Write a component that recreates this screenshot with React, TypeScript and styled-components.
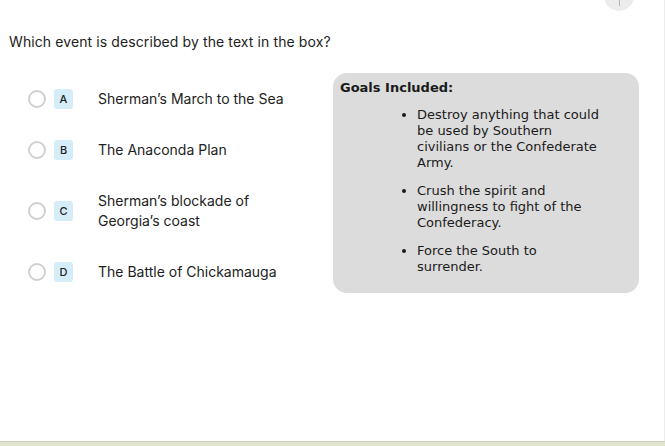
import styled, { createGlobalStyle } from "styled-components";

const GlobalStyle = createGlobalStyle`
  html, body {
    margin: 0;
    padding: 0;
    background: #ffffff;
  }
`;

const Page = styled.div`
  position: relative;
  width: 665px;
  height: 446px;
  overflow: hidden;
  display: flex;
  flex-direction: column;
  background: #fff;
  font-family: "Inter", "Lato", sans-serif;
  color: #222;
`;

const Body = styled.div`
  flex: 1;
  border-right: 1px solid #ececec;
  padding: 33px 0 0 9px;
`;

const Question = styled.div`
  font-size: 14px;
  line-height: 18px;
  letter-spacing: 0.1px;
`;

const Columns = styled.div`
  display: flex;
  align-items: flex-start;
  margin-top: 22px;
`;

const Options = styled.div`
  width: 324px;
  display: flex;
  flex-direction: column;
  margin-top: 1px;
`;

const Option = styled.div`
  display: flex;
  align-items: center;
  padding: 15px 0 16px 19px;
`;

const Radio = styled.span`
  width: 14px;
  height: 14px;
  border: 2px solid #d0d0d0;
  border-radius: 50%;
  flex-shrink: 0;
`;

const Badge = styled.span`
  width: 19px;
  height: 20px;
  margin-left: 8px;
  border-radius: 3px;
  background: #d5edf8;
  display: flex;
  align-items: center;
  justify-content: center;
  font-size: 11px;
  font-weight: 500;
  color: #222;
  flex-shrink: 0;
`;

const OptionText = styled.span`
  margin-left: 25px;
  font-size: 14px;
  line-height: 20px;
  width: 205px;
`;

const Box = styled.div`
  width: 306px;
  box-sizing: border-box;
  background: #dcdcdc;
  border-radius: 14px;
  padding: 7px 7px 18px;
  font-family: "DejaVu Sans", Verdana, sans-serif;
  font-size: 13px;
  line-height: 16px;
  color: #1a1a1a;
`;

const BoxTitle = styled.div`
  font-weight: bold;
`;

const Goals = styled.ul`
  margin: 11px 0 0;
  padding: 0 29px 0 77px;
`;

const Goal = styled.li`
  margin-bottom: 12px;

  &:last-child {
    margin-bottom: 0;
  }
`;

const Corner = styled.div`
  position: absolute;
  left: 604px;
  top: -19px;
  width: 30px;
  height: 30px;
  border-radius: 50%;
  background: #ececec;
  display: flex;
  justify-content: center;
  align-items: flex-end;

  &::after {
    content: "";
    width: 1px;
    height: 6px;
    margin-bottom: 5px;
    background: #b5b5b5;
  }
`;

const Footer = styled.div`
  height: 4px;
  border-top: 1px solid #cdcfc4;
  background: #e1e5d0;
`;

const options = [
  { key: "A", text: "Sherman\u2019s March to the Sea" },
  { key: "B", text: "The Anaconda Plan" },
  { key: "C", text: "Sherman\u2019s blockade of Georgia\u2019s coast" },
  { key: "D", text: "The Battle of Chickamauga" },
];

const goals = [
  "Destroy anything that could be used by Southern civilians or the Confederate Army.",
  "Crush the spirit and willingness to fight of the Confederacy.",
  "Force the South to surrender.",
];

export default function App() {
  return (
    <Page>
      <GlobalStyle />
      <Corner />
      <Body>
        <Question>Which event is described by the text in the box?</Question>
        <Columns>
          <Options>
            {options.map((o) => (
              <Option key={o.key}>
                <Radio />
                <Badge>{o.key}</Badge>
                <OptionText>{o.text}</OptionText>
              </Option>
            ))}
          </Options>
          <Box>
            <BoxTitle>Goals Included:</BoxTitle>
            <Goals>
              {goals.map((g) => (
                <Goal key={g}>{g}</Goal>
              ))}
            </Goals>
          </Box>
        </Columns>
      </Body>
      <Footer />
    </Page>
  );
}
